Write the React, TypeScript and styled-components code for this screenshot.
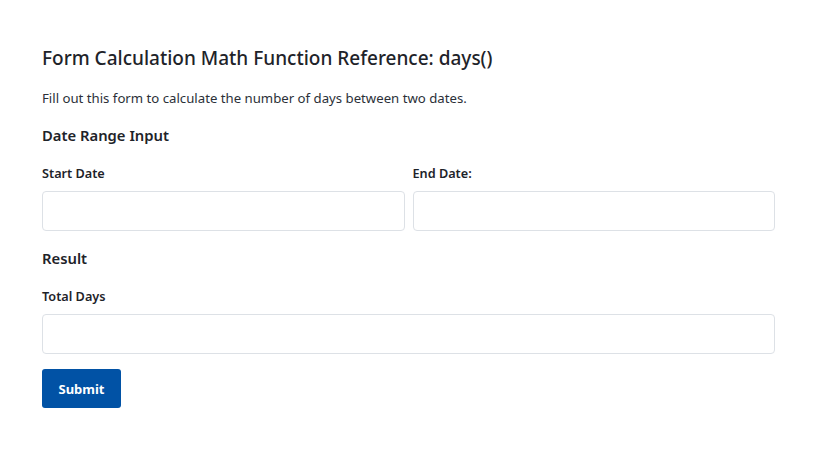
import styled, { createGlobalStyle } from "styled-components";

const GlobalStyle = createGlobalStyle`
  html, body {
    margin: 0;
    padding: 0;
    background: #ffffff;
  }
  body {
    font-family: "Noto Sans", "Open Sans", sans-serif;
    color: #212529;
  }
`;

const Page = styled.div`
  padding: 45px 0 0 42px;
`;

const Form = styled.form`
  width: 733px;
  display: flex;
  flex-direction: column;
`;

const Title = styled.h1`
  margin: 0;
  font-size: 19px;
  line-height: 26px;
  font-weight: 500;
  color: #1e2329;
`;

const Intro = styled.p`
  margin: 17px 0 0;
  font-size: 13.2px;
  line-height: 20px;
  color: #2b3038;
`;

const Section = styled.h2<{ $top: number }>`
  margin: ${(p) => p.$top}px 0 0;
  font-size: 14.8px;
  line-height: 22px;
  font-weight: 600;
  color: #1e2329;
`;

const Row = styled.div`
  display: grid;
  grid-template-columns: 1fr 1fr;
  gap: 8px;
`;

const Field = styled.div`
  display: flex;
  flex-direction: column;
`;

const Label = styled.label`
  margin-top: 18px;
  font-size: 12.7px;
  line-height: 18px;
  font-weight: 600;
  color: #1e2329;
`;

const Input = styled.input`
  margin-top: 9px;
  height: 40px;
  box-sizing: border-box;
  border: 1px solid #dde1e6;
  border-radius: 4px;
  padding: 0 10px;
  font: inherit;
  background: #fff;
  outline: none;
`;

const Button = styled.button`
  margin-top: 15px;
  align-self: flex-start;
  width: 79px;
  height: 39px;
  border: none;
  border-radius: 3px;
  background: #0152a5;
  color: #fff;
  font-family: inherit;
  font-size: 13px;
  font-weight: 700;
  cursor: pointer;
`;

export default function App() {
  return (
    <>
      <GlobalStyle />
      <Page>
        <Form onSubmit={(e) => e.preventDefault()}>
          <Title>Form Calculation Math Function Reference: days()</Title>
          <Intro>Fill out this form to calculate the number of days between two dates.</Intro>
          <Section $top={16}>Date Range Input</Section>
          <Row>
            <Field>
              <Label>Start Date</Label>
              <Input type="text" />
            </Field>
            <Field>
              <Label>End Date:</Label>
              <Input type="text" />
            </Field>
          </Row>
          <Section $top={16}>Result</Section>
          <Field>
            <Label>Total Days</Label>
            <Input type="text" />
          </Field>
          <Button type="submit">Submit</Button>
        </Form>
      </Page>
    </>
  );
}
